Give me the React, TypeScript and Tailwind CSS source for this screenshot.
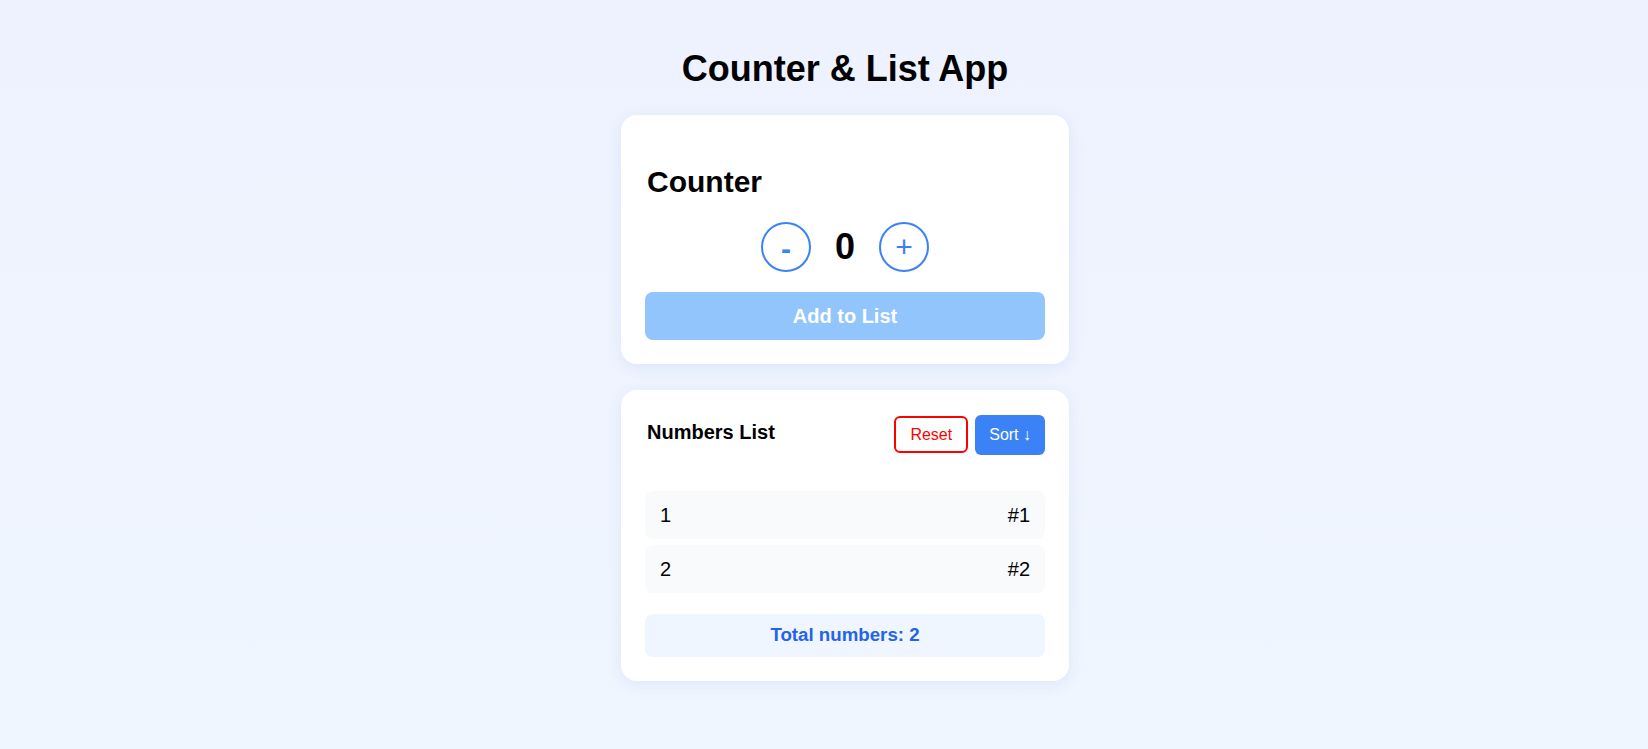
import React from "react";

export default function App() {
  const items = [1, 2];
  return (
    <div
      className="min-h-screen w-full bg-linear-to-b from-[#edf2fe] to-[#f0f6ff] flex flex-col items-center pt-[49px] pb-10 pl-[42px] text-black"
      style={{ fontFamily: '"Liberation Sans", Arial, sans-serif' }}
    >
      <h1 className="text-4xl leading-10 font-bold">Counter &amp; List App</h1>

      <div className="mt-[26px] w-[448px] bg-white rounded-2xl shadow-[0_4px_16px_rgba(30,64,175,0.08)] px-6 pb-6 pt-[49px] flex flex-col">
        <h2 className="text-3xl leading-9 font-bold pl-[2px]">Counter</h2>
        <div className="mt-[22px] flex items-center justify-center gap-6">
          <button className="w-[50px] h-[50px] rounded-full border-2 border-[#3b82f6] text-[#3b82f6] text-3xl font-bold flex items-center justify-center">
            <span className="translate-y-[2px]">-</span>
          </button>
          <span className="text-4xl leading-10 font-bold w-[20px] text-center">0</span>
          <button className="w-[50px] h-[50px] rounded-full border-2 border-[#3b82f6] text-[#3b82f6] text-3xl flex items-center justify-center">
            +
          </button>
        </div>
        <button className="mt-[20px] h-12 w-full rounded-lg bg-[#93c5fd] text-white text-xl font-bold">
          Add to List
        </button>
      </div>

      <div className="mt-[26px] w-[448px] bg-white rounded-2xl shadow-[0_4px_16px_rgba(30,64,175,0.08)] p-6 flex flex-col">
        <div className="flex items-start justify-between">
          <h3 className="text-xl leading-7 font-bold pt-[4px] pl-[2px]">Numbers List</h3>
          <div className="flex items-start gap-[7px]">
            <button className="mt-[2px] h-[37px] px-3.5 border-2 border-[#ff0000] rounded-md bg-white text-[#ff0000] text-base">
              Reset
            </button>
            <button className="mt-[1px] h-10 px-3.5 rounded-md bg-[#3b82f6] text-white text-base">
              Sort ↓
            </button>
          </div>
        </div>
        <ul className="mt-9 flex flex-col gap-1.5">
          {items.map((n, i) => (
            <li
              key={n}
              className="h-12 px-[15px] rounded-lg bg-[#f8fafc] flex items-center justify-between text-xl"
            >
              <span>{n}</span>
              <span>#{i + 1}</span>
            </li>
          ))}
        </ul>
        <div className="mt-[21px] h-[43px] rounded-lg bg-[#eff6ff] flex items-center justify-center text-[#2563eb] font-bold text-[18.7px]">
          Total numbers: 2
        </div>
      </div>
    </div>
  );
}
